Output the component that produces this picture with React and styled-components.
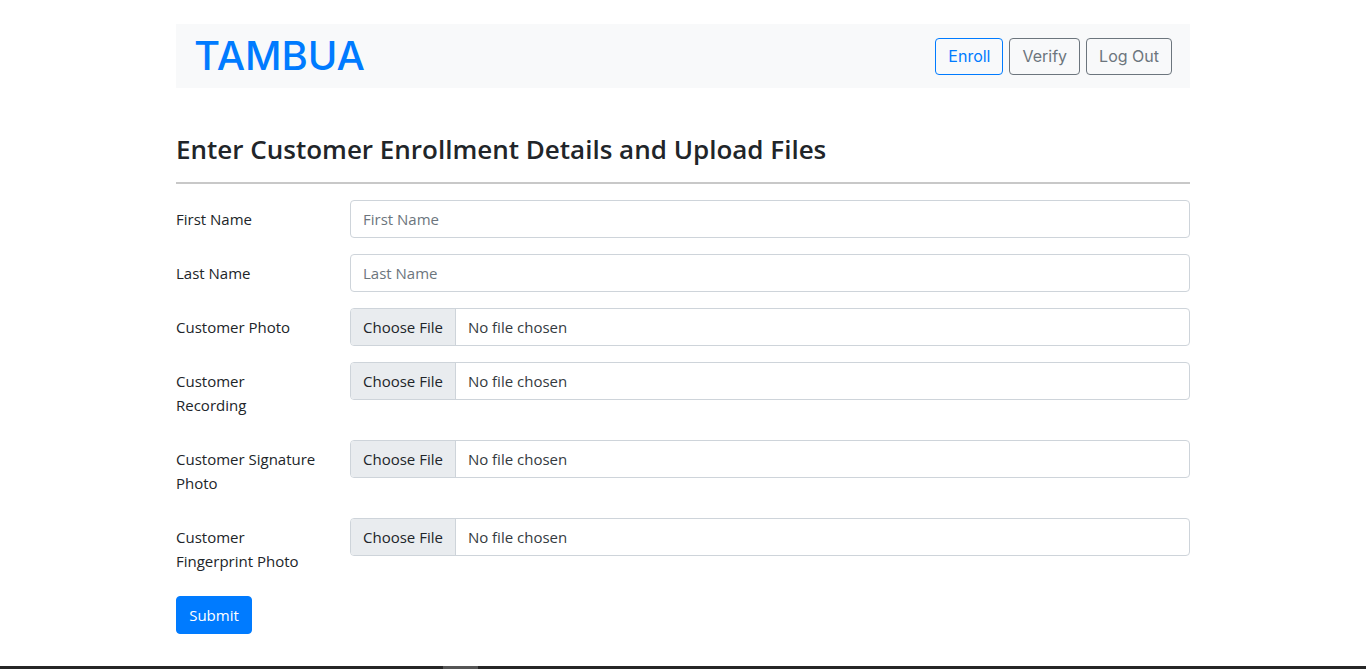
import React from "react";
import styled, { createGlobalStyle } from "styled-components";

const GlobalStyle = createGlobalStyle`
  body {
    margin: 0;
    background: #fff;
    font-family: "Open Sans", "Noto Sans", sans-serif;
    color: #212529;
  }
  * { box-sizing: border-box; }
`;

const Page = styled.div`
  width: 1014px;
  margin: 24px auto 0;
`;

const NavBar = styled.nav`
  height: 64px;
  background: #f8f9fa;
  display: flex;
  align-items: center;
  justify-content: space-between;
  padding: 0 18px 0 18px;
`;

const Logo = styled.div`
  font-family: Inter, "Noto Sans", sans-serif;
  font-size: 40px;
  font-weight: 500;
  color: #007bff;
  line-height: 1;
`;

const NavButtons = styled.div`
  display: flex;
  gap: 6px;
`;

const NavButton = styled.button`
  font-family: Inter, "Noto Sans", sans-serif;
  font-size: 16px;
  height: 37px;
  padding: 0 12px;
  background: transparent;
  border: 1px solid ${(p) => (p.primary ? "#007bff" : "#6c757d")};
  color: ${(p) => (p.primary ? "#007bff" : "#6c757d")};
  border-radius: 4px;
`;

const Title = styled.h3`
  font-size: 26px;
  font-weight: 600;
  margin: 46px 0 0;
  line-height: 1.2;
  color: #212529;
`;

const Divider = styled.hr`
  border: 0;
  height: 2px;
  background: #c8c8c8;
  margin: 17px 0 16px;
`;

const Row = styled.div`
  display: grid;
  grid-template-columns: 144px 1fr;
  column-gap: 30px;
  align-items: start;
  margin-bottom: 16px;
`;

const Label = styled.label`
  font-size: 15px;
  line-height: 24px;
  padding: 7px 0;
`;

const TextInput = styled.input`
  width: 100%;
  height: 38px;
  padding: 6px 12px;
  font-family: "Open Sans", "Noto Sans", sans-serif;
  font-size: 15px;
  color: #495057;
  border: 1px solid #ced4da;
  border-radius: 4px;
  outline: none;
  &::placeholder { color: #6c757d; }
`;

const FileInput = styled.input`
  width: 100%;
  height: 38px;
  padding: 6px 12px;
  font-family: "Open Sans", "Noto Sans", sans-serif;
  font-size: 15px;
  line-height: 24px;
  color: #343a40;
  border: 1px solid #ced4da;
  border-radius: 4px;
  overflow: hidden;
  &::file-selector-button {
    height: 36px;
    padding: 6px 12px;
    margin: -6px 12px -6px -12px;
    border: 0;
    border-right: 1px solid #ced4da;
    border-radius: 0;
    background: #e9ecef;
    color: #212529;
    font: inherit;
  }
`;

const Submit = styled.button`
  font-family: "Open Sans", "Noto Sans", sans-serif;
  font-size: 15px;
  height: 38px;
  padding: 0 12px;
  width: 76px;
  background: #007bff;
  color: #fff;
  border: 1px solid #007bff;
  border-radius: 4px;
`;

const ScrollBar = styled.div`
  position: fixed;
  left: 0;
  right: 0;
  bottom: 0;
  height: 3px;
  background: #262626;
  &::after {
    content: "";
    position: absolute;
    left: 443px;
    width: 35px;
    top: 0;
    bottom: 0;
    background: #555;
  }
`;

const fields = [
  { label: "First Name", type: "text" },
  { label: "Last Name", type: "text" },
  { label: ["Customer Photo"], type: "file" },
  { label: ["Customer", "Recording"], type: "file" },
  { label: ["Customer Signature", "Photo"], type: "file" },
  { label: ["Customer", "Fingerprint Photo"], type: "file" },
];

export default function App() {
  return (
    <>
      <GlobalStyle />
      <Page>
        <NavBar>
          <Logo>TAMBUA</Logo>
          <NavButtons>
            <NavButton primary>Enroll</NavButton>
            <NavButton>Verify</NavButton>
            <NavButton>Log Out</NavButton>
          </NavButtons>
        </NavBar>
        <Title>Enter Customer Enrollment Details and Upload Files</Title>
        <Divider />
        <form onSubmit={(e) => e.preventDefault()}>
          {fields.map((f, i) => (
            <Row key={i}>
              <Label>
                {Array.isArray(f.label)
                  ? f.label.map((l, j) => (
                      <React.Fragment key={j}>
                        {j > 0 && <br />}
                        {l}
                      </React.Fragment>
                    ))
                  : f.label}
              </Label>
              {f.type === "text" ? (
                <TextInput placeholder={f.label} />
              ) : (
                <FileInput type="file" />
              )}
            </Row>
          ))}
          <Submit type="submit">Submit</Submit>
        </form>
      </Page>
      <ScrollBar />
    </>
  );
}
